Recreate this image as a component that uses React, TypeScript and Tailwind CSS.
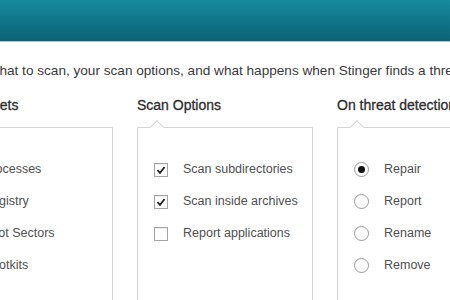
import React from "react";

const font = { fontFamily: '"Liberation Sans", Arial, sans-serif' };

function Check({ checked }: { checked: boolean }) {
  return (
    <span className="flex h-[14px] w-[14px] items-center justify-center border border-[#a4a4a4] bg-white shadow-[inset_0_1px_1px_rgba(0,0,0,0.08)]">
      {checked && (
        <svg width="10" height="10" viewBox="0 0 10 10">
          <path d="M1.5 5.2 L4 7.8 L8.6 2" fill="none" stroke="#222" strokeWidth="1.8" />
        </svg>
      )}
    </span>
  );
}

function Radio({ checked }: { checked: boolean }) {
  return (
    <span className="flex h-[15px] w-[15px] items-center justify-center rounded-full border border-[#9a9a9a] bg-white">
      {checked && <span className="h-[7px] w-[7px] rounded-full bg-[#111]" />}
    </span>
  );
}

function Panel({ title, children }: { title: string; children: React.ReactNode }) {
  return (
    <div className="flex w-[176px] shrink-0 flex-col">
      <h3 className="h-[22px] text-[14px] leading-[22px] text-[#2e2e2e] [-webkit-text-stroke:0.3px_#2e2e2e]">{title}</h3>
      <div className="relative mt-[11px] h-[200px] border border-[#d6d6d6] bg-white">
        <span className="absolute -top-[6px] left-[14px] h-[10px] w-[10px] rotate-45 border-l border-t border-[#d6d6d6] bg-white" />
        <ul className="flex flex-col gap-[13px] pt-[32px] pl-[16px]">{children}</ul>
      </div>
    </div>
  );
}

function Item({ control, label }: { control: React.ReactNode; label: string }) {
  return (
    <li className="flex h-[19px] items-center gap-[15px] text-[12.5px] text-[#505050]">
      {control}
      <span>{label}</span>
    </li>
  );
}

export default function App() {
  return (
    <div className="h-[300px] w-[450px] overflow-hidden bg-white" style={font}>
      <div className="h-[41px] bg-gradient-to-b from-[#178a9e] to-[#0b6276]" />
      <div className="h-px bg-[#9ccfd8]" />
      <div className="ml-[-63px] flex flex-col">
        <p className="mt-[20px] ml-[2px] whitespace-nowrap text-[13.6px] leading-[18px] text-[#3a3a3a]">
          Choose what to scan, your scan options, and what happens when Stinger finds a threat.
        </p>
        <div className="mt-[14px] flex gap-[24px]">
          <Panel title="Scan Targets">
            <Item control={<Check checked />} label="Processes" />
            <Item control={<Check checked />} label="Registry" />
            <Item control={<Check checked />} label="Boot Sectors" />
            <Item control={<Check checked />} label="Rootkits" />
          </Panel>
          <Panel title="Scan Options">
            <Item control={<Check checked />} label="Scan subdirectories" />
            <Item control={<Check checked />} label="Scan inside archives" />
            <Item control={<Check checked={false} />} label="Report applications" />
          </Panel>
          <Panel title="On threat detection">
            <Item control={<Radio checked />} label="Repair" />
            <Item control={<Radio checked={false} />} label="Report" />
            <Item control={<Radio checked={false} />} label="Rename" />
            <Item control={<Radio checked={false} />} label="Remove" />
          </Panel>
        </div>
      </div>
    </div>
  );
}
